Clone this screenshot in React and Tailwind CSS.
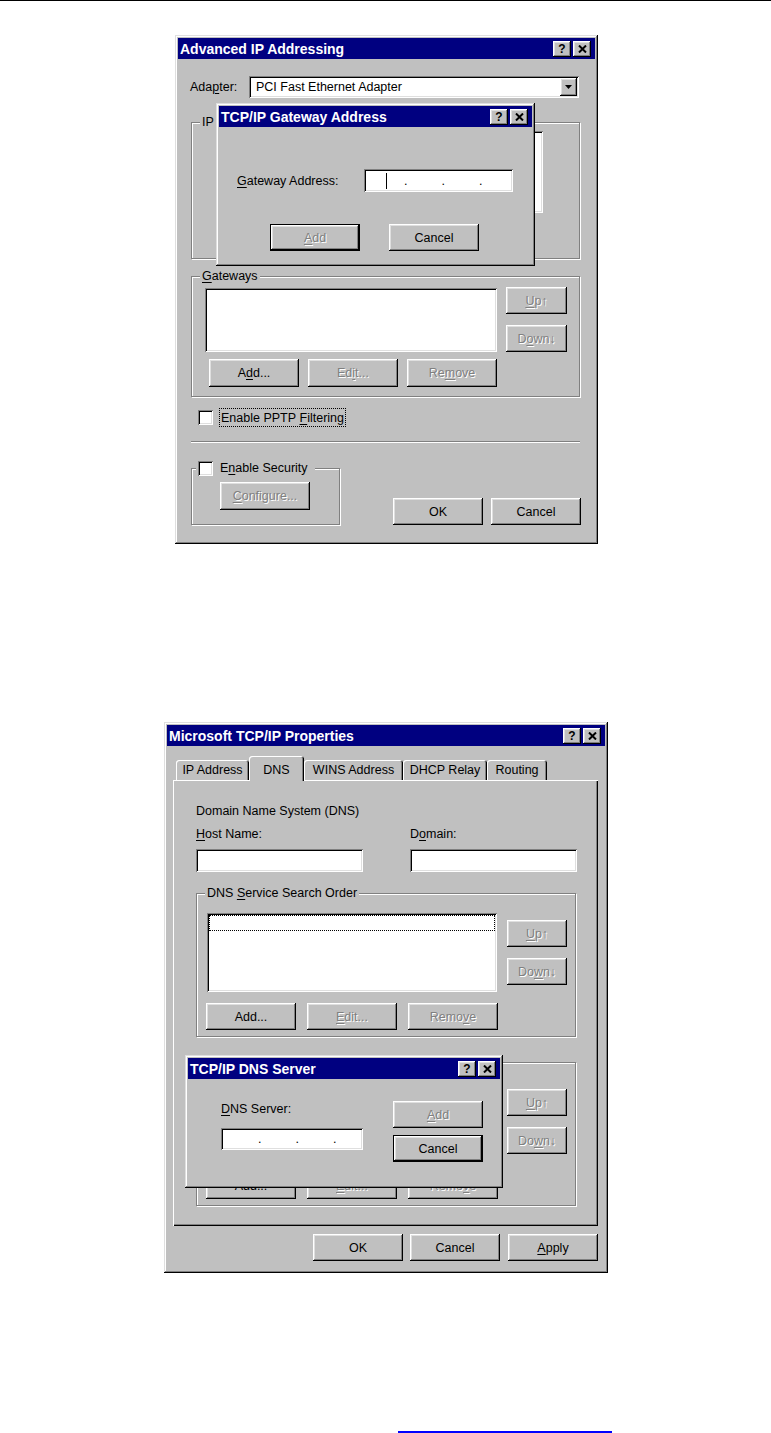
import React from 'react'

const raised = 'shadow-[inset_-1px_-1px_#000,inset_1px_1px_#fff,inset_-2px_-2px_#808080,inset_2px_2px_#dfdfdf]'
const sunken = 'shadow-[inset_1px_1px_#808080,inset_-1px_-1px_#fff,inset_2px_2px_#000,inset_-2px_-2px_#dfdfdf]'
const frame = 'shadow-[inset_-1px_-1px_#000,inset_1px_1px_#dfdfdf,inset_-2px_-2px_#808080,inset_2px_2px_#fff]'
const etched = 'border border-[#808080] shadow-[inset_1px_1px_#fff,1px_1px_#fff]'
const greyed = 'text-[#808080] [text-shadow:1px_1px_0_#fff]'

// кнопка в стиле Win95
const Btn = ({ children, w = 'w-[90px]', h = 'h-[27px]', disabled, isDefault, className = '' }) => (
  <div className={`${w} ${h} shrink-0 bg-[#c0c0c0] ${isDefault ? 'border border-black' : ''} ${className}`}>
    <div className={`w-full h-full flex items-center justify-center ${raised} ${disabled ? greyed : ''}`}>
      {children}
    </div>
  </div>
)

const U = ({ children }) => <span className="underline underline-offset-[2px]">{children}</span>

const TitleBtn = ({ children }) => (
  <div className={`w-[18px] h-[16px] bg-[#c0c0c0] ${raised} flex items-center justify-center`}>{children}</div>
)

const TitleBar = ({ title }) => (
  <div className="h-[21px] bg-[#000080] flex items-center pl-[2px] pr-[4px]">
    <span className="flex-1 text-white font-bold text-[14px] leading-[16px]">{title}</span>
    <div className="flex gap-[2px]">
      <TitleBtn>
        <span className="font-bold text-[12px] leading-[12px] text-black">?</span>
      </TitleBtn>
      <TitleBtn>
        <svg width="9" height="8" viewBox="0 0 9 8">
          <path d="M1 0.5L8 7.5M8 0.5L1 7.5" stroke="#000" strokeWidth="2" />
        </svg>
      </TitleBtn>
    </div>
  </div>
)

const Window = ({ title, className = '', children }) => (
  <div className={`bg-[#c0c0c0] p-[3px] ${frame} ${className}`}>
    <TitleBar title={title} />
    {children}
  </div>
)

const Group = ({ label, className = '', children }) => (
  <div className={`${etched} ${className}`}>
    <div className="-mt-[8px] ml-[8px] w-fit min-w-[4px] h-[14px] bg-[#c0c0c0] px-[2px] leading-[14px]">{label}</div>
    {children}
  </div>
)

const Check = () => <div className={`w-[15px] h-[15px] shrink-0 bg-white ${sunken}`} />

// поле IP-адреса с точками
const IpField = ({ w, h, pad, cursor, className = '' }) => (
  <div className={`${w} ${h} bg-white ${sunken} flex items-center ${pad} ${className}`}>
    <span className="w-[37.5px] flex items-center">
      {cursor && <span className="ml-[16px] w-[1px] h-[16px] bg-black" />}
      <span className="ml-auto">.</span>
    </span>
    <span className="w-[37.5px] text-right">.</span>
    <span className="w-[37.5px] text-right">.</span>
  </div>
)

const Tab = ({ w, selected, children }) => (
  <div
    className={`${w} shrink-0 bg-[#c0c0c0] rounded-t-[3px] flex items-center justify-center shadow-[inset_1px_1px_#fff,inset_-1px_0_#000,inset_-2px_0_#808080] ${
      selected ? 'h-[25px] pt-[3px]' : 'h-[20px] mb-[1px]'
    }`}
  >
    {children}
  </div>
)

const DnsGroup = ({ label, className = '', focusRow }) => (
  <Group label={label} className={`w-[380px] h-[144px] ${className}`}>
    <div className="mt-[13px] ml-[10px] flex items-start">
      <div className={`w-[290px] h-[79px] bg-white ${sunken} pt-[2px] px-[2px]`}>
        {focusRow && <div className="h-[16px] border border-dotted border-black" />}
      </div>
      <div className="ml-[10px] mt-[7px] flex flex-col gap-[11px]">
        <Btn w="w-[60px]" disabled><U>U</U>p↑</Btn>
        <Btn w="w-[60px]" disabled>Do<U>w</U>n↓</Btn>
      </div>
    </div>
    <div className="mt-[11px] ml-[9px] flex gap-[11px]">
      <Btn>Add...</Btn>
      <Btn disabled><U>E</U>dit...</Btn>
      <Btn disabled>Remo<U>v</U>e</Btn>
    </div>
  </Group>
)

export default function App() {
  return (
    <div className="bg-white min-h-[1433px] text-black text-[12.5px] leading-[14px] [font-family:'Liberation_Sans',Arial,sans-serif]">
      <div className="h-px bg-black" />

      {/* Advanced IP Addressing */}
      <Window title="Advanced IP Addressing" className="relative ml-[175px] mt-[34px] w-[423px] h-[509px]">
        <div className="mt-[17px] ml-[12px] flex items-center">
          <span className="w-[59px]">Ada<U>p</U>ter:</span>
          <div className={`w-[330px] h-[22px] bg-white ${sunken} flex items-center pl-[7px] pr-[2px]`}>
            <span className="flex-1">PCI Fast Ethernet Adapter</span>
            <div className={`w-[17px] h-[18px] bg-[#c0c0c0] ${raised} flex items-center justify-center`}>
              <svg width="7" height="4" viewBox="0 0 7 4">
                <polygon points="0,0 7,0 3.5,4" fill="#000" />
              </svg>
            </div>
          </div>
        </div>

        <Group label="IP" className="mt-[24px] ml-[13px] w-[389px] h-[137px]">
          <div className={`mt-[2px] ml-[33px] w-[318px] h-[82px] bg-white ${sunken}`} />
        </Group>

        <Group label={<><U>G</U>ateways</>} className="mt-[17px] ml-[13px] w-[389px] h-[121px]">
          <div className="mt-[5px] ml-[13px] flex items-start">
            <div className={`w-[292px] h-[64px] bg-white ${sunken}`} />
            <div className="ml-[9px] -mt-[1px] flex flex-col gap-[11px]">
              <Btn w="w-[61px]" disabled><U>U</U>p↑</Btn>
              <Btn w="w-[61px]" disabled>D<U>o</U>wn↓</Btn>
            </div>
          </div>
          <div className="mt-[7px] ml-[17px] flex gap-[9px]">
            <Btn h="h-[28px]">A<U>d</U>d...</Btn>
            <Btn h="h-[28px]" disabled>Ed<U>i</U>t...</Btn>
            <Btn h="h-[28px]" disabled>Re<U>m</U>ove</Btn>
          </div>
        </Group>

        <div className="mt-[11px] ml-[20px] h-[19px] flex items-center">
          <Check />
          <span className="ml-[6px] h-[19px] px-[1px] border border-dotted border-black flex items-center">
            Enable PPTP&nbsp;<U>F</U>iltering
          </span>
        </div>

        <div className="mt-[14px] ml-[13px] w-[389px] h-[2px] border-t border-t-[#808080] border-b border-b-white" />

        <div className="mt-[25px] ml-[13px] flex items-end">
          <div className={`${etched} w-[149px] h-[57px]`}>
            <div className="-mt-[9px] ml-[4px] w-fit h-[16px] bg-[#c0c0c0] pl-[2px] pr-[7px] flex items-center">
              <Check />
              <span className="ml-[7px]">E<U>n</U>able Security</span>
            </div>
            <Btn className="mt-[6px] ml-[28px]" h="h-[28px]" disabled><U>C</U>onfigure...</Btn>
          </div>
          <Btn className="ml-[53px]">OK</Btn>
          <Btn className="ml-[8px]">Cancel</Btn>
        </div>

        {/* диалог поверх */}
        <Window title="TCP/IP Gateway Address" className="absolute left-[41px] top-[68px] w-[319px] h-[163px]">
          <div className="mt-[42px] ml-[18px] flex items-center">
            <span className="w-[127px]"><U>G</U>ateway Address:</span>
            <IpField w="w-[149px]" h="h-[23px]" pad="pl-[6px]" cursor />
          </div>
          <div className="mt-[32px] ml-[51px] flex gap-[29px]">
            <Btn disabled isDefault><U>A</U>dd</Btn>
            <Btn>Cancel</Btn>
          </div>
        </Window>
      </Window>

      {/* Microsoft TCP/IP Properties */}
      <Window title="Microsoft TCP/IP Properties" className="relative ml-[164px] mt-[178px] w-[444px] h-[551px]">
        <div className="mt-[10px] ml-[6px] pl-[3px] h-[25px] flex items-end relative z-10 -mb-[1px]">
          <Tab w="w-[73px]">IP Address</Tab>
          <Tab w="w-[55px]" selected>DNS</Tab>
          <Tab w="w-[99px]">WINS Address</Tab>
          <Tab w="w-[84px]">DHCP Relay</Tab>
          <Tab w="w-[60px]">Routing</Tab>
        </div>
        <div className="ml-[6px] w-[425px] h-[446px] pt-[24px] pl-[23px] shadow-[inset_1px_1px_#fff,inset_-1px_-1px_#000,inset_-2px_-2px_#808080]">
          <div>Domain Name System (DNS)</div>
          <div className="mt-[9px] flex gap-[47px]">
            <div className="w-[167px]">
              <div><U>H</U>ost Name:</div>
              <div className={`mt-[8px] h-[23px] bg-white ${sunken}`} />
            </div>
            <div className="w-[167px]">
              <div>D<U>o</U>main:</div>
              <div className={`mt-[8px] h-[23px] bg-white ${sunken}`} />
            </div>
          </div>
          <DnsGroup label={<>DNS <U>S</U>ervice Search Order</>} className="mt-[21px]" focusRow />
          <DnsGroup label={null} className="mt-[25px]" />
        </div>
        <div className="mt-[8px] ml-[146px] flex">
          <Btn>OK</Btn>
          <Btn className="ml-[7px]">Cancel</Btn>
          <Btn className="ml-[8px]"><U>A</U>pply</Btn>
        </div>

        <Window title="TCP/IP DNS Server" className="absolute left-[21px] top-[333px] w-[318px] h-[133px]">
          <div className="flex">
            <div className="ml-[33px] mt-[23px]">
              <div><U>D</U>NS Server:</div>
              <IpField w="w-[142px]" h="h-[22px]" pad="pl-[3px]" className="mt-[12px]" />
            </div>
            <div className="ml-[30px] mt-[22px] flex flex-col gap-[7px]">
              <Btn disabled><U>A</U>dd</Btn>
              <Btn isDefault>Cancel</Btn>
            </div>
          </div>
        </Window>
      </Window>

      <div className="mt-[158px] ml-[398px] w-[214px] h-[2px] bg-[#0000ff]" />
    </div>
  )
}
